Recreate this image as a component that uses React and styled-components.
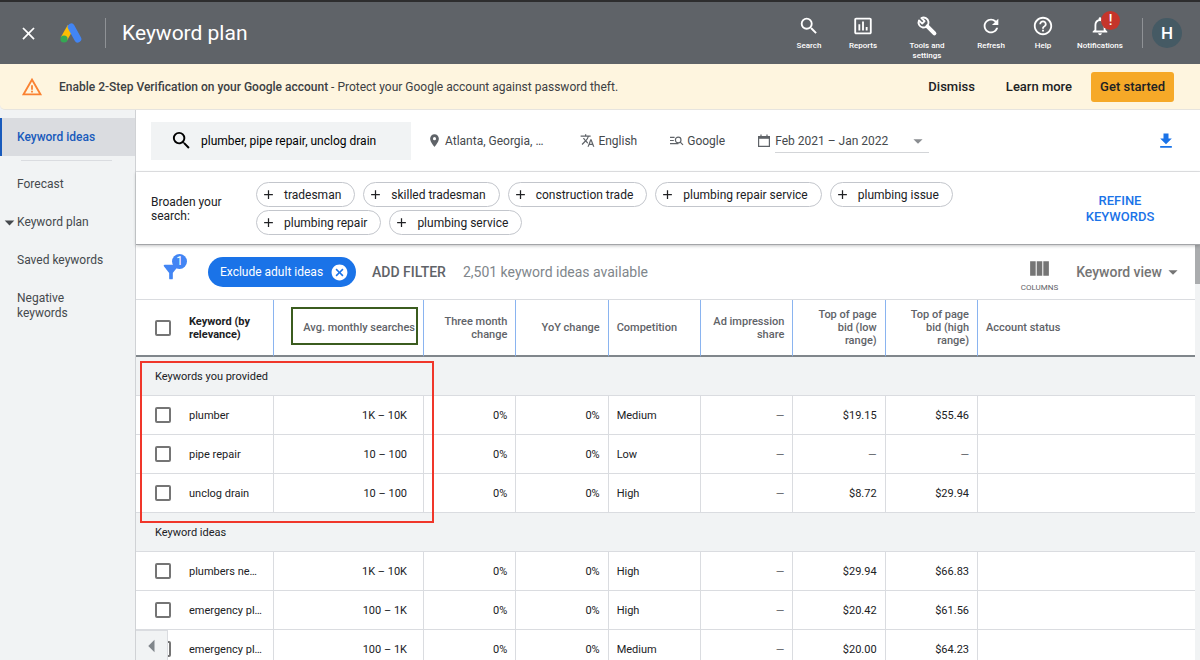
import React from "react";
import styled, { createGlobalStyle } from "styled-components";
import {
  MdClose, MdSearch, MdInsertChartOutlined, MdRefresh, MdHelpOutline,
  MdNotificationsNone, MdWarningAmber, MdPlace, MdTranslate, MdArrowDropDown,
  MdFileDownload, MdAdd, MdCancel, MdFilterAlt, MdViewColumn, MdArrowLeft,
} from "react-icons/md";

const Global = createGlobalStyle`
  *, *::before, *::after { box-sizing: border-box; }
  body { margin: 0; font-family: Roboto, "Liberation Sans", sans-serif; color: #202124; background: #f1f3f4; }
  button, input { font: inherit; color: inherit; }
  button { border: 0; padding: 0; background: none; cursor: pointer; }
  a { color: inherit; text-decoration: none; }
  svg { display: block; flex: none; }
`;

const Page = styled.div`
  height: 100vh;
  display: flex;
  flex-direction: column;
  overflow: hidden;
`;

/* ---------- top bar ---------- */
const TopBar = styled.header`
  height: 64px;
  flex: none;
  display: flex;
  align-items: center;
  padding: 0 18px 0 19px;
  border-top: 2px solid #2d2d2e;
  background: #5f6368;
  color: #fff;
`;
const CloseButton = styled.button`
  display: flex;
  width: 18px;
  justify-content: center;
`;
const Logo = styled.svg`
  width: 22px;
  height: 20px;
  margin-left: 23px;
`;
const Separator = styled.span`
  width: 1px;
  height: 30px;
  flex: none;
  background: #8f9296;
  margin: ${(p) => p.$margin};
`;
const Title = styled.h1`
  margin: 0;
  flex: 1;
  font-size: 21px;
  line-height: 24px;
  font-weight: 400;
`;
const Tools = styled.nav`
  display: flex;
  align-items: flex-start;
  height: 50px;
`;
const Tool = styled.button`
  position: relative;
  width: ${(p) => p.$width}px;
  display: flex;
  flex-direction: column;
  align-items: center;
  gap: 4px;
  padding-top: 7px;
  font-size: 8px;
  line-height: 10px;
  font-weight: 500;
  svg { width: 22px; height: 22px; }
`;
const Alert = styled.span`
  position: absolute;
  top: 3px;
  right: 12px;
  width: 19px;
  height: 19px;
  border-radius: 50%;
  background: #c5352b;
  font-size: 14px;
  line-height: 19px;
  text-align: center;
`;
const Avatar = styled.button`
  width: 30px;
  height: 30px;
  border-radius: 50%;
  background: #455a64;
  font-size: 17px;
  font-weight: 500;
`;

/* ---------- security banner ---------- */
const Banner = styled.section`
  height: 46px;
  flex: none;
  display: flex;
  align-items: center;
  padding: 0 26px 0 21px;
  border-bottom: 1px solid #e6e4df;
  border-bottom-left-radius: 5px;
  background: #fef5df;
  font-size: 12px;
  color: #3c4043;
  > svg { width: 22px; height: 22px; color: #fa8232; }
`;
const BannerText = styled.p`
  flex: 1;
  margin: 0 0 0 16px;
  b { font-weight: 500; }
`;
const BannerLink = styled.button`
  margin-right: ${(p) => p.$gap}px;
  font-size: 13px;
  font-weight: 500;
  color: #202124;
  white-space: nowrap;
`;
const StartButton = styled(BannerLink)`
  height: 30px;
  padding: 0 9px;
  margin: 0;
  border-radius: 3px;
  background: #f6a928;
`;

/* ---------- sidebar ---------- */
const Body = styled.div`
  flex: 1;
  min-height: 0;
  display: flex;
`;
const Sidebar = styled.nav`
  width: 136px;
  flex: none;
  padding-top: 8px;
  border-right: 1px solid #d0d2d5;
  background: #f1f3f4;
  font-size: 12px;
  line-height: 15px;
  color: #45494d;
`;
const SideLink = styled.a`
  display: flex;
  position: relative;
  padding: 13px 24px 10px 17px;
`;
const ActiveLink = styled(SideLink)`
  padding: 12px 0 11px 15px;
  border-left: 2px solid #185abc;
  background: #dadce0;
  color: #185abc;
  font-weight: 500;
`;
const SideRule = styled.hr`
  height: 1px;
  margin: 4px 23px 3px 21px;
  border: 0;
  background: #dadce0;
`;
const Expander = styled(MdArrowDropDown)`
  position: absolute;
  left: -2px;
  top: 9px;
  width: 23px;
  height: 23px;
`;

/* ---------- search settings ---------- */
const Main = styled.main`
  flex: 1;
  min-width: 0;
  display: flex;
  flex-direction: column;
  background: #fff;
`;
const Settings = styled.section`
  height: 62px;
  flex: none;
  display: flex;
  align-items: center;
  padding: 0 24px 0 15px;
  border-bottom: 1px solid #e3e4e6;
  font-size: 12px;
  color: #45494d;
`;
const SearchBox = styled.label`
  width: 260px;
  height: 38px;
  display: flex;
  align-items: center;
  gap: 8px;
  padding-left: 19px;
  margin-right: 16px;
  background: #f1f3f4;
  color: #000;
  svg { width: 23px; height: 23px; }
  input { flex: 1; min-width: 0; border: 0; padding: 0; background: none; outline: 0; }
`;
const Setting = styled.button`
  display: flex;
  align-items: center;
  gap: 3px;
  margin-right: ${(p) => p.$gap}px;
  white-space: nowrap;
  svg { width: 15px; height: 15px; color: #5f6368; }
`;
const DateRange = styled.button`
  flex: 0 1 154px;
  height: 24px;
  padding-top: 1px;
  display: flex;
  align-items: center;
  justify-content: space-between;
  border-bottom: 1px solid #d3d5d8;
  white-space: nowrap;
  svg { width: 22px; height: 22px; color: #8a8d91; }
`;
const CalendarIcon = styled.svg`
  width: 14px;
  height: 14px;
  margin-right: 4px;
  color: #5f6368;
`;
const Download = styled.button`
  margin-left: auto;
  color: #1a73e8;
  svg { width: 20px; height: 20px; }
`;

/* ---------- broaden search ---------- */
const Broaden = styled.section`
  position: relative;
  z-index: 1;
  flex: none;
  display: flex;
  align-items: center;
  padding: 10px 36px 9px 15px;
  border-bottom: 1px solid #a3a5a8;
  box-shadow: 0 1px 3px rgba(60, 64, 67, 0.3);
  font-size: 12px;
  line-height: 14px;
`;
const BroadenLabel = styled.p`
  width: 105px;
  flex: none;
  margin: 0;
  padding-right: 24px;
`;
const Chips = styled.div`
  flex: 1;
  display: flex;
  flex-wrap: wrap;
  gap: 3px 8px;
  padding-right: 60px;
`;
const Chip = styled.button`
  height: 25px;
  display: flex;
  align-items: center;
  gap: 8px;
  padding: 0 13px 0 4px;
  border: 1px solid #c3c6cc;
  border-radius: 13px;
  white-space: nowrap;
  svg { width: 15px; height: 15px; }
`;
const Refine = styled.button`
  width: 88px;
  flex: none;
  font-size: 13px;
  line-height: 16px;
  font-weight: 500;
  color: #1a73e8;
`;

/* ---------- results ---------- */
const Results = styled.section`
  flex: 1;
  min-height: 0;
  display: flex;
  position: relative;
`;
const Pane = styled.div`
  flex: 1;
  min-width: 0;
  overflow: hidden;
`;
const ScrollTrack = styled.div`
  width: 5px;
  flex: none;
  background: #f1f3f4;
  &::before { content: ""; display: block; height: 39px; background: #aaacae; }
`;
const FilterBar = styled.div`
  height: 54px;
  display: flex;
  align-items: center;
  padding: 0 11px 0 24px;
  font-size: 14px;
  color: #5f6368;
`;
const FilterButton = styled.button`
  position: relative;
  margin-right: 26px;
  color: #4285f4;
  svg { width: 22px; height: 22px; }
`;
const Count = styled.span`
  position: absolute;
  left: 12px;
  top: -7px;
  width: 15px;
  height: 15px;
  border-radius: 50%;
  background: #4285f4;
  color: #fff;
  font-size: 12px;
  line-height: 15px;
`;
const FilterChip = styled.span`
  height: 30px;
  display: flex;
  align-items: center;
  gap: 7px;
  padding: 0 7px 0 12px;
  margin-right: 16px;
  border-radius: 15px;
  background: #1a73e8;
  color: #fff;
  font-size: 12px;
  white-space: nowrap;
  svg { width: 19px; height: 19px; }
`;
const AddFilter = styled.button`
  margin-right: 17px;
  font-weight: 500;
`;
const Available = styled.span`
  flex: 1;
  color: #80868b;
`;
const Columns = styled.button`
  display: flex;
  flex-direction: column;
  align-items: center;
  gap: 2px;
  margin-right: 18px;
  padding-top: 3px;
  font-size: 8px;
  line-height: 9px;
  svg { width: 25px; height: 25px; color: #757575; }
`;
const ViewButton = styled.button`
  display: flex;
  align-items: center;
  font-weight: 500;
  color: #757575;
  svg { width: 22px; height: 22px; }
`;

const Table = styled.table`
  width: 100%;
  table-layout: fixed;
  border-collapse: separate;
  border-spacing: 0;
  border-top: 1px solid #dadce0;
  font-size: 11px;
  line-height: 13px;
`;
const HeadCell = styled.th`
  height: 57px;
  padding: 0 8px;
  position: relative;
  border-bottom: 2px solid #80868b;
  border-right: ${(p) => (p.$rule ? "1px solid #8ab4f0" : "0")};
  text-align: ${(p) => p.$align || "right"};
  font-weight: ${(p) => (p.$strong ? 700 : 500)};
  color: ${(p) => (p.$strong ? "#202124" : "#5f6368")};
`;
const Cell = styled.td`
  height: 39px;
  padding: 0 ${(p) => (p.$wide ? 16 : 8)}px 0 8px;
  border-bottom: 1px solid #dadce0;
  border-right: ${(p) => (p.$rule ? "1px solid #dadce0" : "0")};
  text-align: ${(p) => p.$align || "right"};
  white-space: nowrap;
  background: #fff;
`;
const GroupCell = styled.th`
  height: 39px;
  padding: 0 19px;
  border-bottom: 1px solid #dadce0;
  background: #f1f3f4;
  text-align: left;
  font-weight: 400;
`;
const Check = styled.input.attrs({ type: "checkbox" })`
  appearance: none;
  display: block;
  width: 16px;
  height: 16px;
  margin: 0 0 0 11px;
  border: 2px solid #757575;
  border-radius: 2px;
  background: #fff;
`;
const Dash = styled.span`
  color: #5f6368;
`;
const TableWrap = styled.div`
  position: relative;
`;
const GreenMark = styled.span`
  position: absolute;
  inset: 7px 5px 10px 17px;
  border: 2px solid #3b5c1f;
`;
const RedMark = styled.div`
  position: absolute;
  left: 4px;
  top: 62px;
  width: 294px;
  height: 162px;
  border: 2px solid #f0362a;
  pointer-events: none;
`;
const Collapse = styled.button`
  position: absolute;
  left: 0;
  bottom: 0;
  width: 32px;
  height: 30px;
  display: flex;
  align-items: center;
  justify-content: center;
  border-top: 1px solid #dadce0;
  border-right: 1px solid #dadce0;
  background: #f1f3f4;
  color: #80868b;
  svg { width: 30px; height: 30px; }
`;

const suggestions = [
  "tradesman", "skilled tradesman", "construction trade", "plumbing repair service",
  "plumbing issue", "plumbing repair", "plumbing service",
];

const groups = [
  {
    name: "Keywords you provided",
    rows: [
      ["plumber", "1K – 10K", "Medium", "$19.15", "$55.46"],
      ["pipe repair", "10 – 100", "Low", "—", "—"],
      ["unclog drain", "10 – 100", "High", "$8.72", "$29.94"],
    ],
  },
  {
    name: "Keyword ideas",
    rows: [
      ["plumbers ne…", "1K – 10K", "High", "$29.94", "$66.83"],
      ["emergency pl…", "100 – 1K", "High", "$20.42", "$61.56"],
      ["emergency pl…", "100 – 1K", "Medium", "$20.00", "$64.23"],
    ],
  },
];

const money = (value) => (value === "—" ? <Dash>—</Dash> : value);

function Row({ row }) {
  const [keyword, searches, competition, low, high] = row;
  return (
    <tr>
      <Cell $align="left"><Check aria-label={keyword} /></Cell>
      <Cell $align="left" $rule>{keyword}</Cell>
      <Cell $wide $rule>{searches}</Cell>
      <Cell $rule>0%</Cell>
      <Cell $rule>0%</Cell>
      <Cell $align="left" $rule>{competition}</Cell>
      <Cell $rule><Dash>—</Dash></Cell>
      <Cell $rule>{money(low)}</Cell>
      <Cell $rule>{money(high)}</Cell>
      <Cell />
    </tr>
  );
}

function WrenchIcon() {
  return (
    <svg viewBox="0 0 22 22" fill="none" stroke="currentColor">
      <path d="M5.4 3 8.6 6.2 6.2 8.6 3 5.4A5 5 0 1 0 5.4 3Z" strokeWidth="1.9" strokeLinejoin="round" />
      <path d="m11.4 11.4 7 7" strokeWidth="4" strokeLinecap="round" />
    </svg>
  );
}

export default function App() {
  return (
    <Page>
      <Global />
      <TopBar>
        <CloseButton aria-label="Close"><MdClose size={21} /></CloseButton>
        <Logo viewBox="0 0 22 20" aria-hidden="true">
          <path d="M10.8 3.6 4 15.8" stroke="#fbbc04" strokeWidth="7" />
          <path d="M11.2 4 17.8 16" stroke="#4285f4" strokeWidth="7" strokeLinecap="round" />
          <circle cx="4" cy="16" r="3.6" fill="#34a853" />
        </Logo>
        <Separator $margin="0 16px 0 23px" />
        <Title>Keyword plan</Title>
        <Tools>
          <Tool $width={54}><MdSearch />Search</Tool>
          <Tool $width={54}><MdInsertChartOutlined />Reports</Tool>
          <Tool $width={74}><WrenchIcon />Tools and<br />settings</Tool>
          <Tool $width={54}><MdRefresh />Refresh</Tool>
          <Tool $width={50}><MdHelpOutline />Help</Tool>
          <Tool $width={64}><MdNotificationsNone /><Alert>!</Alert>Notifications</Tool>
        </Tools>
        <Separator $margin="0 9px 0 10px" />
        <Avatar aria-label="Account">H</Avatar>
      </TopBar>

      <Banner>
        <MdWarningAmber />
        <BannerText>
          <b>Enable 2-Step Verification on your Google account</b> - Protect your Google account against password theft.
        </BannerText>
        <BannerLink $gap={31}>Dismiss</BannerLink>
        <BannerLink $gap={19}>Learn more</BannerLink>
        <StartButton>Get started</StartButton>
      </Banner>

      <Body>
        <Sidebar>
          <ActiveLink href="#ideas">Keyword ideas</ActiveLink>
          <SideRule />
          <SideLink href="#forecast">Forecast</SideLink>
          <SideLink href="#plan"><Expander />Keyword plan</SideLink>
          <SideLink href="#saved">Saved keywords</SideLink>
          <SideLink href="#negative">Negative keywords</SideLink>
        </Sidebar>

        <Main>
          <Settings>
            <SearchBox>
              <MdSearch />
              <input aria-label="Keywords" defaultValue="plumber, pipe repair, unclog drain" />
            </SearchBox>
            <Setting $gap={37}><MdPlace />Atlanta, Georgia, …</Setting>
            <Setting $gap={32}><MdTranslate />English</Setting>
            <Setting $gap={32}>
              <svg viewBox="0 0 15 15" fill="none" stroke="currentColor" strokeWidth="1.2">
                <path d="M1 4.4h4.6M1 7.5h3.8M1 10.6h8.4" />
                <circle cx="9.2" cy="7" r="2.8" />
                <path d="m11 8.8 3 3" />
              </svg>
              Google
            </Setting>
            <CalendarIcon viewBox="0 0 14 14" fill="none" stroke="currentColor" strokeWidth="1.2">
              <path d="M1.6 2.6h10.8v9.8H1.6zM4 .6v2M10 .6v2" />
              <path d="M1.6 3.6h10.8" strokeWidth="2.4" />
            </CalendarIcon>
            <DateRange>Feb 2021 – Jan 2022<MdArrowDropDown /></DateRange>
            <Download aria-label="Download"><MdFileDownload /></Download>
          </Settings>

          <Broaden>
            <BroadenLabel>Broaden your search:</BroadenLabel>
            <Chips>
              {suggestions.map((s) => <Chip key={s}><MdAdd />{s}</Chip>)}
            </Chips>
            <Refine>REFINE KEYWORDS</Refine>
          </Broaden>

          <Results>
            <Pane>
              <FilterBar>
                <FilterButton aria-label="Filters"><MdFilterAlt /><Count>1</Count></FilterButton>
                <FilterChip>Exclude adult ideas<button aria-label="Remove filter"><MdCancel /></button></FilterChip>
                <AddFilter>ADD FILTER</AddFilter>
                <Available>2,501 keyword ideas available</Available>
                <Columns><MdViewColumn />COLUMNS</Columns>
                <ViewButton>Keyword view<MdArrowDropDown /></ViewButton>
              </FilterBar>
              <TableWrap>
                <Table>
                  <colgroup>
                    <col width="45" /><col width="93" /><col width="150" />
                    <col /><col /><col /><col /><col /><col />
                    <col width="217" />
                  </colgroup>
                  <thead>
                    <tr>
                      <HeadCell $align="left"><Check aria-label="Select all" /></HeadCell>
                      <HeadCell $align="left" $strong $rule>Keyword (by relevance)</HeadCell>
                      <HeadCell $rule>Avg. monthly searches<GreenMark /></HeadCell>
                      <HeadCell $rule>Three month change</HeadCell>
                      <HeadCell $rule>YoY change</HeadCell>
                      <HeadCell $align="left" $rule>Competition</HeadCell>
                      <HeadCell $rule>Ad impression share</HeadCell>
                      <HeadCell $rule>Top of page bid (low<br />range)</HeadCell>
                      <HeadCell $rule>Top of page bid (high<br />range)</HeadCell>
                      <HeadCell $align="left">Account status</HeadCell>
                    </tr>
                  </thead>
                  {groups.map((group) => (
                    <tbody key={group.name}>
                      <tr><GroupCell colSpan={10}>{group.name}</GroupCell></tr>
                      {group.rows.map((row, i) => <Row key={i} row={row} />)}
                    </tbody>
                  ))}
                </Table>
                <RedMark />
              </TableWrap>
            </Pane>
            <ScrollTrack />
            <Collapse aria-label="Collapse"><MdArrowLeft /></Collapse>
          </Results>
        </Main>
      </Body>
    </Page>
  );
}
